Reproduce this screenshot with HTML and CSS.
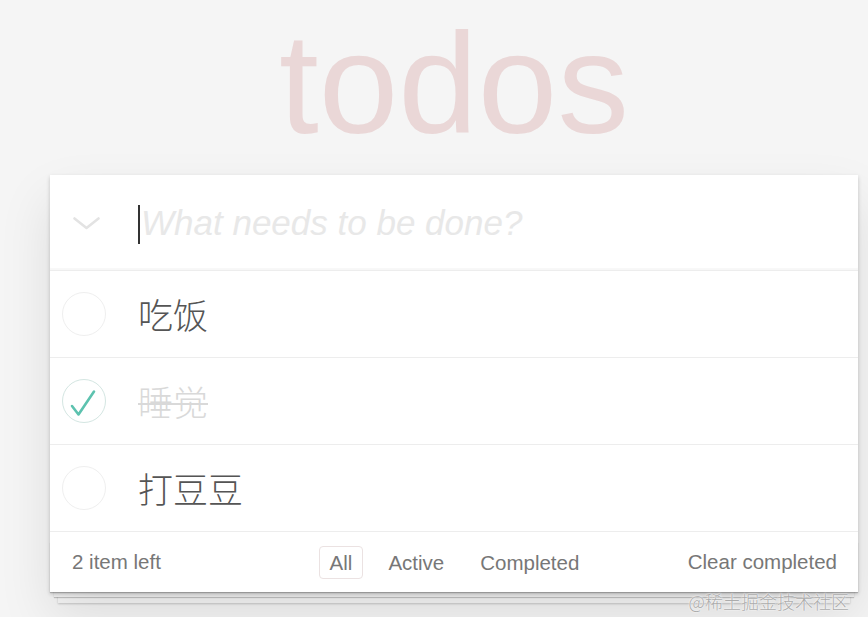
FILE: index.html
```html
<!DOCTYPE html>
<html lang="zh">
<head>
<meta charset="utf-8">
<title>todos</title>
<link rel="stylesheet" href="styles.css">
</head>
<body>
<section class="app">
  <h1 class="title">todos</h1>
  <div class="card">
    <header class="new-row">
      <svg class="toggle-all" width="27" height="13" viewBox="0 0 27 13"><polyline points="1.5,1.5 13.5,11 25.5,1.5" fill="none" stroke="#e3e3e3" stroke-width="2.6" stroke-linecap="round" stroke-linejoin="round"/></svg>
      <span class="caret"></span>
      <input class="new-todo" type="text" placeholder="What needs to be done?">
    </header>
    <ul class="list">
      <li class="item">
        <span class="circle"></span>
        <span class="label">吃饭</span>
      </li>
      <li class="item done">
        <span class="circle checked"><svg width="44" height="44" viewBox="0 0 44 44"><polyline points="10,27 16.5,35.5 32,12.5" fill="none" stroke="#5dc2af" stroke-width="2.6" stroke-linecap="round" stroke-linejoin="round"/></svg></span>
        <span class="label">睡觉</span>
      </li>
      <li class="item">
        <span class="circle"></span>
        <span class="label">打豆豆</span>
      </li>
    </ul>
    <footer class="footer">
      <span class="count">2 item left</span>
      <ul class="filters">
        <li><a class="filter selected">All</a></li>
        <li><a class="filter">Active</a></li>
        <li><a class="filter">Completed</a></li>
      </ul>
      <span class="clear">Clear completed</span>
    </footer>
  </div>
  <div class="watermark">@稀土掘金技术社区</div>
</section>
</body>
</html>
```

FILE: styles.css
```css
html, body {
  margin: 0;
  padding: 0;
}
body {
  background: #f5f5f5;
  font-family: "Liberation Sans", "Noto Sans CJK SC", sans-serif;
  color: #4d4d4d;
  width: 868px;
  height: 617px;
  overflow: hidden;
}
.app {
  position: relative;
  width: 808px;
  margin-left: 50px;
}
.title {
  margin: 12px 0 19px;
  height: 144px;
  line-height: 144px;
  font-size: 143px;
  font-weight: 400;
  text-align: center;
  color: rgba(175, 47, 47, 0.15);
  letter-spacing: 0;
}
.card {
  position: relative;
  background: #fff;
  box-shadow: 0 2px 4px rgba(0, 0, 0, 0.2), 0 25px 50px rgba(0, 0, 0, 0.1);
}
.new-row {
  display: flex;
  align-items: center;
  height: 95px;
  border-bottom: 1px solid #ededed;
  box-shadow: inset 0 -2px 1px rgba(0, 0, 0, 0.03);
}
.toggle-all {
  margin-left: 23px;
  margin-top: 2px;
  flex: none;
}
.caret {
  width: 2px;
  height: 39px;
  background: #333;
  margin-left: 38px;
  margin-top: 3px;
  flex: none;
}
.new-todo {
  flex: 1;
  border: 0;
  outline: none;
  padding: 0;
  margin-left: 1px;
  font-family: "Liberation Sans", sans-serif;
  font-size: 35px;
  font-style: italic;
  color: #4d4d4d;
  background: transparent;
}
.new-todo::placeholder {
  color: #e8e8e8;
  font-style: italic;
}
.list {
  list-style: none;
  margin: 0;
  padding: 0;
}
.item {
  display: flex;
  align-items: center;
  height: 86px;
  border-bottom: 1px solid #ededed;
  padding-left: 12px;
}
.circle {
  width: 42px;
  height: 42px;
  border: 1px solid #efefef;
  border-radius: 50%;
  flex: none;
  position: relative;
}
.circle.checked {
  border-color: #d4e6e2;
}
.circle svg {
  position: absolute;
  left: -1px;
  top: -1px;
}
.label {
  margin-left: 32px;
  font-size: 35px;
  line-height: 40px;
  color: #555;
  font-family: "Noto Sans CJK SC", sans-serif;
  font-weight: 300;
}
.done .label {
  color: #d9d9d9;
  background: linear-gradient(#d9d9d9, #d9d9d9) no-repeat 0 58% / 100% 2px;
}
.footer {
  position: relative;
  display: grid;
  grid-template-columns: 1fr auto 1fr;
  align-items: center;
  height: 60px;
  padding: 0 21px 0 22px;
  font-size: 20.5px;
  color: #777;
}
.footer::before {
  content: "";
  position: absolute;
  left: 0;
  right: 0;
  bottom: 0;
  height: 50px;
  z-index: -1;
  box-shadow: 0 1px 1px rgba(0, 0, 0, 0.2),
    0 9px 0 -4px #f6f6f6,
    0 10px 1px -4px rgba(0, 0, 0, 0.2),
    0 19px 0 -8px #f6f6f6,
    0 20px 2px -8px rgba(0, 0, 0, 0.2);
}
.count {
  justify-self: start;
  margin-top: -1px;
}
.filters {
  display: flex;
  list-style: none;
  margin: 0;
  padding: 0;
}
.filter {
  display: block;
  margin: 0 7.5px;
  padding: 4px 9.5px;
  border: 1px solid transparent;
  border-radius: 4px;
  color: #777;
  line-height: 23px;
}
.filter.selected {
  border-color: #ebe2e2;
}
.clear {
  justify-self: end;
}
.watermark {
  position: absolute;
  right: 9px;
  top: 577px;
  font-size: 18px;
  font-family: "Noto Sans CJK SC", sans-serif;
  font-weight: 300;
  color: #ababab;
  text-shadow: 0 0 2px #fff, 0 0 1px #fff;
  line-height: 24px;
}
```
